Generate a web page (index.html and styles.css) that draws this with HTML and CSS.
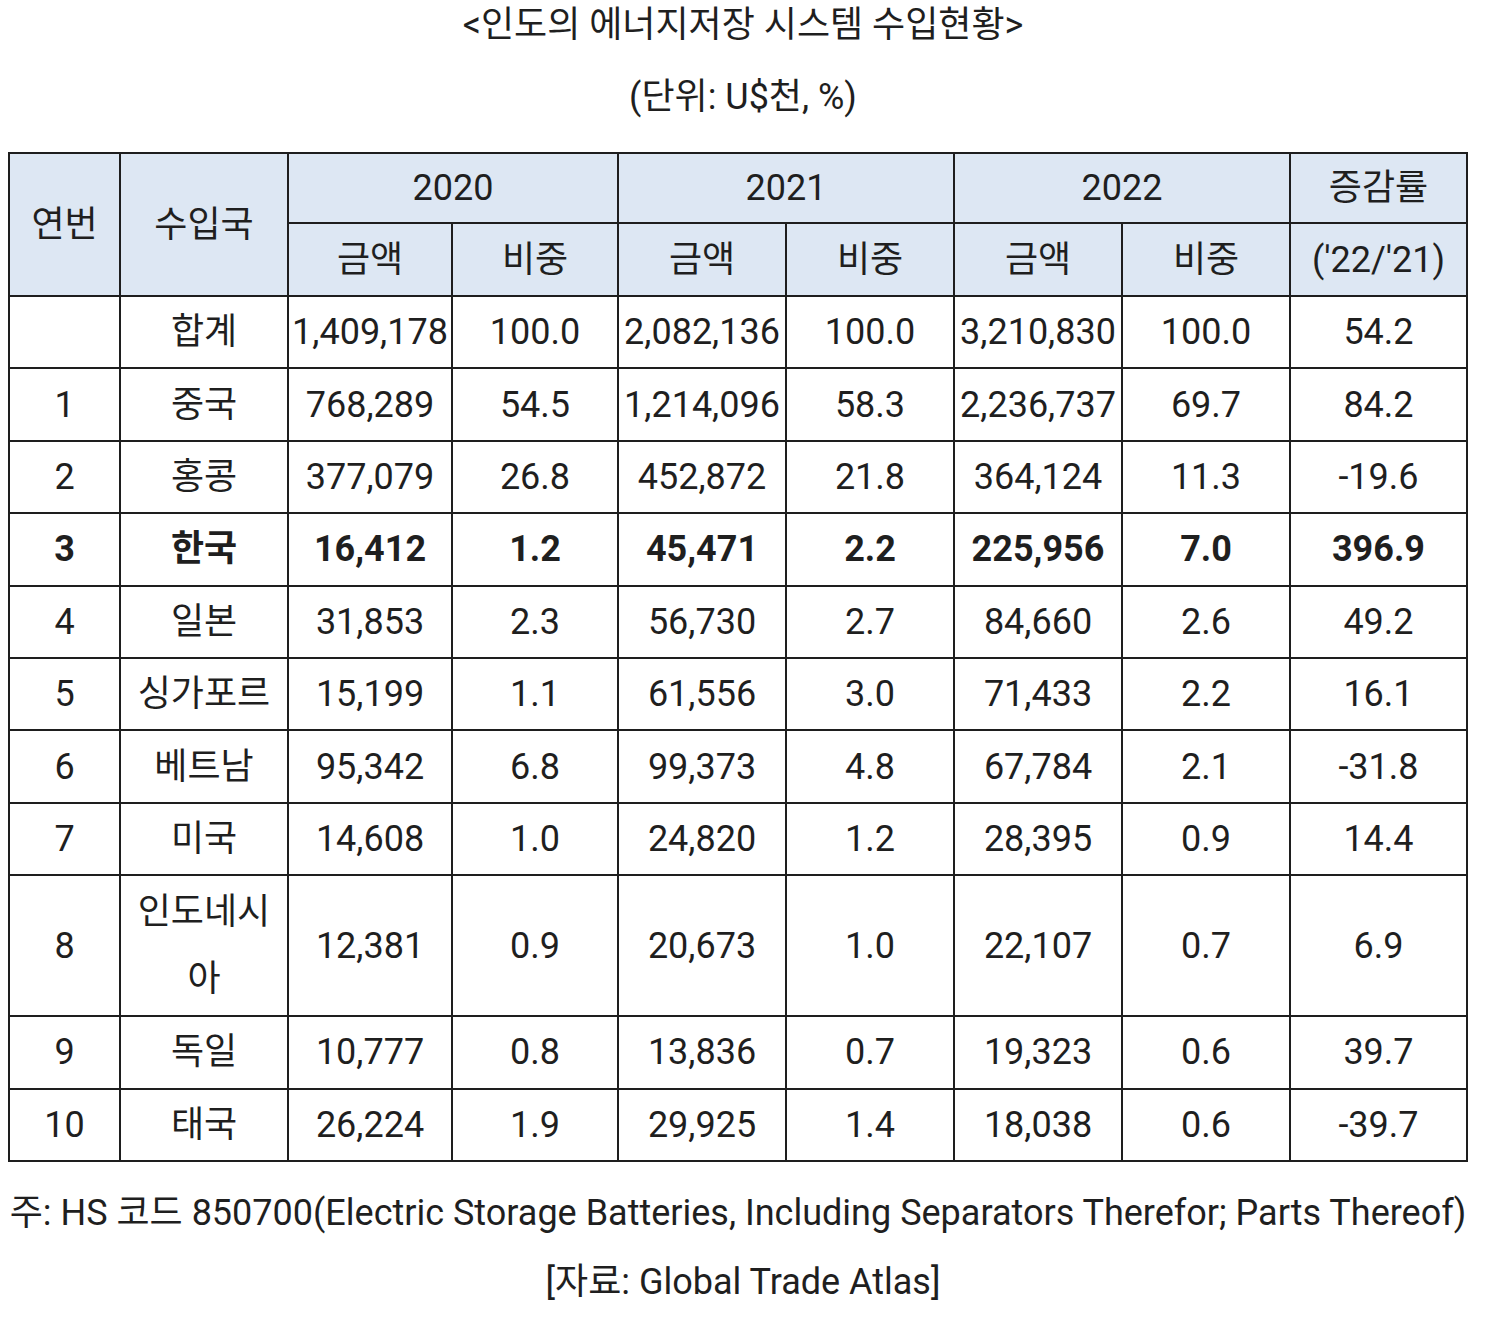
FILE: index.html
```html
<!DOCTYPE html>
<html lang="ko">
<head>
<meta charset="utf-8">
<title>인도의 에너지저장 시스템 수입현황</title>
<link rel="stylesheet" href="styles.css">
</head>
<body>
<div class="page">
  <h1 class="title">&lt;인도의 에너지저장 시스템 수입현황&gt;</h1>
  <p class="unit">(단위: U$천, %)</p>
  <table class="data">
    <colgroup>
      <col class="c-no"><col class="c-country">
      <col class="c-1a"><col class="c-1b"><col class="c-2a"><col class="c-2b"><col class="c-3a"><col class="c-3b">
      <col class="c-rate">
    </colgroup>
    <thead>
      <tr class="h1">
        <th rowspan="2">연번</th>
        <th rowspan="2">수입국</th>
        <th colspan="2">2020</th>
        <th colspan="2">2021</th>
        <th colspan="2">2022</th>
        <th>증감률</th>
      </tr>
      <tr class="h2">
        <th>금액</th><th>비중</th>
        <th>금액</th><th>비중</th>
        <th>금액</th><th>비중</th>
        <th>('22/'21)</th>
      </tr>
    </thead>
    <tbody>
      <tr><td></td><td>합계</td><td>1,409,178</td><td>100.0</td><td>2,082,136</td><td>100.0</td><td>3,210,830</td><td>100.0</td><td>54.2</td></tr>
      <tr><td>1</td><td>중국</td><td>768,289</td><td>54.5</td><td>1,214,096</td><td>58.3</td><td>2,236,737</td><td>69.7</td><td>84.2</td></tr>
      <tr><td>2</td><td>홍콩</td><td>377,079</td><td>26.8</td><td>452,872</td><td>21.8</td><td>364,124</td><td>11.3</td><td>-19.6</td></tr>
      <tr class="strong"><td>3</td><td>한국</td><td>16,412</td><td>1.2</td><td>45,471</td><td>2.2</td><td>225,956</td><td>7.0</td><td>396.9</td></tr>
      <tr><td>4</td><td>일본</td><td>31,853</td><td>2.3</td><td>56,730</td><td>2.7</td><td>84,660</td><td>2.6</td><td>49.2</td></tr>
      <tr><td>5</td><td>싱가포르</td><td>15,199</td><td>1.1</td><td>61,556</td><td>3.0</td><td>71,433</td><td>2.2</td><td>16.1</td></tr>
      <tr><td>6</td><td>베트남</td><td>95,342</td><td>6.8</td><td>99,373</td><td>4.8</td><td>67,784</td><td>2.1</td><td>-31.8</td></tr>
      <tr><td>7</td><td>미국</td><td>14,608</td><td>1.0</td><td>24,820</td><td>1.2</td><td>28,395</td><td>0.9</td><td>14.4</td></tr>
      <tr class="tall"><td>8</td><td class="wrap">인도네시아</td><td>12,381</td><td>0.9</td><td>20,673</td><td>1.0</td><td>22,107</td><td>0.7</td><td>6.9</td></tr>
      <tr><td>9</td><td>독일</td><td>10,777</td><td>0.8</td><td>13,836</td><td>0.7</td><td>19,323</td><td>0.6</td><td>39.7</td></tr>
      <tr><td>10</td><td>태국</td><td>26,224</td><td>1.9</td><td>29,925</td><td>1.4</td><td>18,038</td><td>0.6</td><td>-39.7</td></tr>
    </tbody>
  </table>
  <p class="note">주: HS 코드 850700(Electric Storage Batteries, Including Separators Therefor; Parts Thereof)</p>
  <p class="source">[자료: Global Trade Atlas]</p>
</div>
</body>
</html>
```

FILE: styles.css
```css
html, body {
  margin: 0;
  padding: 0;
  background: #ffffff;
}

body {
  font-family: Roboto, "Noto Sans CJK KR", "Noto Sans", sans-serif;
  color: #1f1f1f;
}

.page {
  width: 1486px;
  display: flex;
  flex-direction: column;
  align-items: center;
}

.title {
  margin: 0;
  font-size: 36px;
  font-weight: 400;
  line-height: 50px;
  height: 50px;
}

.unit {
  margin: 22px 0 0;
  font-size: 36px;
  line-height: 50px;
  height: 50px;
}

.data {
  margin: 30px 0 0;
  align-self: flex-start;
  margin-left: 8px;
  width: 1458px;
  border-collapse: collapse;
  table-layout: fixed;
  font-size: 36px;
}

.c-no { width: 111px; }
.c-country { width: 168px; }
.c-1a { width: 164px; }
.c-1b { width: 166px; }
.c-2a { width: 168px; }
.c-2b { width: 168px; }
.c-3a { width: 168px; }
.c-3b { width: 168px; }
.c-rate { width: 177px; }

.data th,
.data td {
  border: 2.5px solid #1e1e1e;
  padding: 0;
  text-align: center;
  vertical-align: middle;
  line-height: 66px;
  white-space: nowrap;
}

.data th {
  background: #dde7f3;
  font-weight: 400;
}

.h1 { height: 70px; }
.h2 { height: 73px; }
.data tbody tr { height: 72.4px; }
.data tbody tr.tall { height: 141px; }

.data td.wrap {
  white-space: normal;
  word-break: break-all;
  line-height: 67px;
  padding: 0 8px;
}

.strong td { font-weight: 700; }

.note {
  margin: 26px 10px 0 0;
  font-size: 36px;
  line-height: 50px;
  height: 50px;
  white-space: nowrap;
}

.source {
  margin: 19px 0 0;
  font-size: 36px;
  line-height: 50px;
  height: 50px;
}
```
